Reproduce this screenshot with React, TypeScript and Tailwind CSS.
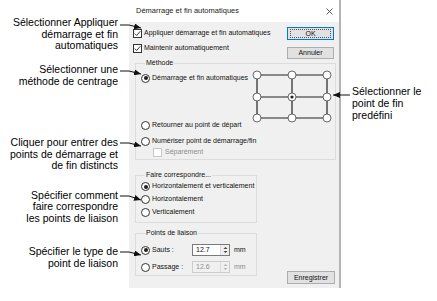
import React from 'react'

function Radio({ on = false }: { on?: boolean }) {
  return (
    <span className="inline-flex w-[9px] h-[9px] shrink-0 rounded-full border border-[#333333] bg-white items-center justify-center">
      {on && <span className="w-[4px] h-[4px] rounded-full bg-[#1e1e1e]" />}
    </span>
  )
}

function Check({ on = false, disabled = false }: { on?: boolean; disabled?: boolean }) {
  return (
    <span className={`inline-flex w-[9px] h-[9px] shrink-0 border bg-white ${disabled ? 'border-[#c6c6c6]' : 'border-[#333333]'}`}>
      {on && (
        <svg viewBox="0 0 7 7" className="w-full h-full">
          <path d="M0.8 3.6 L2.7 5.5 L6.3 1.2" fill="none" stroke="#222" strokeWidth="0.9" />
        </svg>
      )}
    </span>
  )
}

function Spin({ value, disabled = false }: { value: string; disabled?: boolean }) {
  return (
    <div className={`flex w-[38px] h-[12px] border ${disabled ? 'border-[#cccccc] bg-[#f0f0f0] text-[#8f8f8f]' : 'border-[#7a7a7a] bg-white text-[#111111]'}`}>
      <span className="flex-1 pl-[3px] leading-[10px]">{value}</span>
      <span className="w-[9px] flex items-center justify-center bg-[#f0f0f0] border-l border-[#dadada]">
        <svg width="5" height="8" viewBox="0 0 5 8">
          <path d="M0.5 3 L2.5 1 L4.5 3 Z" fill={disabled ? '#b5b5b5' : '#444'} />
          <path d="M0.5 5 L2.5 7 L4.5 5 Z" fill={disabled ? '#b5b5b5' : '#444'} />
        </svg>
      </span>
    </div>
  )
}

function Btn({ label, primary = false }: { label: string; primary?: boolean }) {
  return (
    <div className={`h-[13px] w-full flex items-center justify-center bg-[#e1e1e1] border ${primary ? 'border-[#0078d7]' : 'border-[#adadad]'}`}>
      {primary ? (
        <span className="w-[calc(100%-4px)] h-[9px] border border-dotted border-[#555555] flex items-center justify-center leading-none">{label}</span>
      ) : (
        <span className="leading-none">{label}</span>
      )}
    </div>
  )
}

// grid of predefined end points
function EndPointGrid() {
  const xs = [6, 41, 76]
  const ys = [8, 30, 51]
  return (
    <svg width="82" height="53" viewBox="0 0 82 53" className="ml-auto overflow-visible shrink-0">
      {ys.map((y) => (
        <line key={'h' + y} x1={xs[0]} y1={y} x2={xs[2]} y2={y} stroke="#222" strokeWidth="1.2" />
      ))}
      {xs.map((x) => (
        <line key={'v' + x} x1={x} y1={ys[0]} x2={x} y2={ys[2]} stroke="#222" strokeWidth="1.2" />
      ))}
      {ys.map((y) =>
        xs.map((x) => (
          <circle key={x + '-' + y} cx={x} cy={y} r="4" fill="white" stroke="#444" strokeWidth="0.8" />
        ))
      )}
      <circle cx={xs[1]} cy={ys[1]} r="1.6" fill="#222" />
    </svg>
  )
}

function App() {
  return (
    <div className="relative w-[437px] h-[301px] bg-white flex overflow-hidden font-['Liberation_Sans',Arial,sans-serif] text-black">
      {/* left callouts */}
      <div className="w-[129px] shrink-0 pr-[11px] text-right text-[10.5px] leading-[11.5px] flex flex-col">
        <div className="mt-[17px]">Sélectionner Appliquer<br />démarrage et fin<br />automatiques</div>
        <div className="mt-[12.75px]">Sélectionner une<br />méthode de centrage</div>
        <div className="mt-[50px]">Cliquer pour entrer des<br />points de démarrage et<br />de fin distincts</div>
        <div className="mt-[17.75px]">Spécifier comment<br />faire correspondre<br />les points de liaison</div>
        <div className="mt-[22.25px]">Spécifier le type de<br />point de liaison</div>
      </div>

      {/* dialog */}
      <div className="w-[212px] h-[288px] shrink-0 bg-[#f0f0f0] border-r-2 border-[#b4b4b4] flex flex-col text-[7px] text-[#111111]">
        <div className="h-[22px] shrink-0 bg-white flex items-center justify-between pl-[7px] pr-[6px]">
          <span className="text-[7.5px] text-[#222222]">Démarrage et fin automatiques</span>
          <svg width="7" height="7" viewBox="0 0 7 7">
            <path d="M0.5 0.5 L6.5 6.5 M6.5 0.5 L0.5 6.5" stroke="#333" strokeWidth="0.8" />
          </svg>
        </div>

        <div className="h-[37px] shrink-0 flex pl-[4px] pr-[5px]">
          <div className="flex-1 pt-[3.5px] flex flex-col">
            <div className="h-[15px] flex items-center gap-[2px]"><Check on /><span>Appliquer démarrage et fin automatiques</span></div>
            <div className="h-[15px] flex items-center gap-[2px]"><Check on /><span>Maintenir automatiquement</span></div>
          </div>
          <div className="w-[47px] pt-[5px] flex flex-col gap-[7px]">
            <Btn label="OK" primary />
            <Btn label="Annuler" />
          </div>
        </div>

        <fieldset className="ml-[6px] mr-[3px] border border-[#dcdcdc] pl-[5px] pr-[2px] pb-[2px]">
          <legend className="ml-[4px] px-[1px] leading-[8px]">Méthode</legend>
          <div className="h-[53px] flex items-start">
            <div className="mt-[6px] h-[10px] flex items-center gap-[2px]"><Radio on /><span>Démarrage et fin automatiques</span></div>
            <EndPointGrid />
          </div>
          <div className="h-[10px] flex items-center gap-[2px]"><Radio /><span>Retourner au point de départ</span></div>
          <div className="mt-[6px] h-[10px] flex items-center gap-[2px]"><Radio /><span>Numériser point de démarrage/fin</span></div>
          <div className="mt-[1px] h-[10px] pl-[12px] flex items-center gap-[3px] text-[#8d8d8d]"><Check disabled /><span>Séparément</span></div>
        </fieldset>

        <div className="flex-1 flex">
          <div className="ml-[6px] w-[122px] flex flex-col">
            <fieldset className="mt-[11px] border border-[#dcdcdc] pl-[5px] pt-[1px] pb-[3px]">
              <legend className="ml-[4px] px-[1px] leading-[8px]">Faire correspondre...</legend>
              <div className="h-[13px] flex items-center gap-[2px]"><Radio on /><span>Horizontalement et verticalement</span></div>
              <div className="h-[13px] flex items-center gap-[2px]"><Radio /><span>Horizontalement</span></div>
              <div className="h-[13px] flex items-center gap-[2px]"><Radio /><span>Verticalement</span></div>
            </fieldset>
            <fieldset className="mt-[6px] border border-[#dcdcdc] pl-[5px] pt-[6px] pb-[1px]">
              <legend className="ml-[4px] px-[1px] leading-[8px]">Points de liaison</legend>
              <div className="h-[14px] flex items-center">
                <div className="w-[51px] flex items-center gap-[2px]"><Radio on /><span>Sauts :</span></div>
                <Spin value="12.7" />
                <span className="ml-[4px]">mm</span>
              </div>
              <div className="mt-[3px] h-[14px] flex items-center">
                <div className="w-[51px] flex items-center gap-[2px]"><Radio /><span>Passage :</span></div>
                <Spin value="12.6" disabled />
                <span className="ml-[4px] text-[#8d8d8d]">mm</span>
              </div>
            </fieldset>
          </div>
          <div className="ml-auto mr-[4px] mb-[4px] self-end w-[48px]">
            <Btn label="Enregistrer" />
          </div>
        </div>
      </div>

      {/* right callout */}
      <div className="pl-[11px] pt-[85px] text-[10.5px] leading-[12px]">
        Sélectionner le<br />point de fin<br />predéfini
      </div>

      {/* callout arrows */}
      <svg className="absolute inset-0 pointer-events-none" width="437" height="301" viewBox="0 0 437 301">
        <defs>
          <marker id="ah" markerUnits="userSpaceOnUse" markerWidth="7" markerHeight="6" refX="7" refY="3" orient="auto">
            <path d="M0 0 L7 3 L0 6 Z" fill="#111" />
          </marker>
        </defs>
        <g fill="none" stroke="#111" strokeWidth="1">
          <polyline points="120,25 129,25 141,28" markerEnd="url(#ah)" />
          <polyline points="120,71 129,71 141,74" markerEnd="url(#ah)" />
          <polyline points="120,143 129,143 141,146" markerEnd="url(#ah)" />
          <polyline points="120,196 129,196 141,200" markerEnd="url(#ah)" />
          <polyline points="120,252 129,252 141,255" markerEnd="url(#ah)" />
          <polyline points="350,95 333,95" markerEnd="url(#ah)" />
        </g>
      </svg>
    </div>
  )
}

export default App
